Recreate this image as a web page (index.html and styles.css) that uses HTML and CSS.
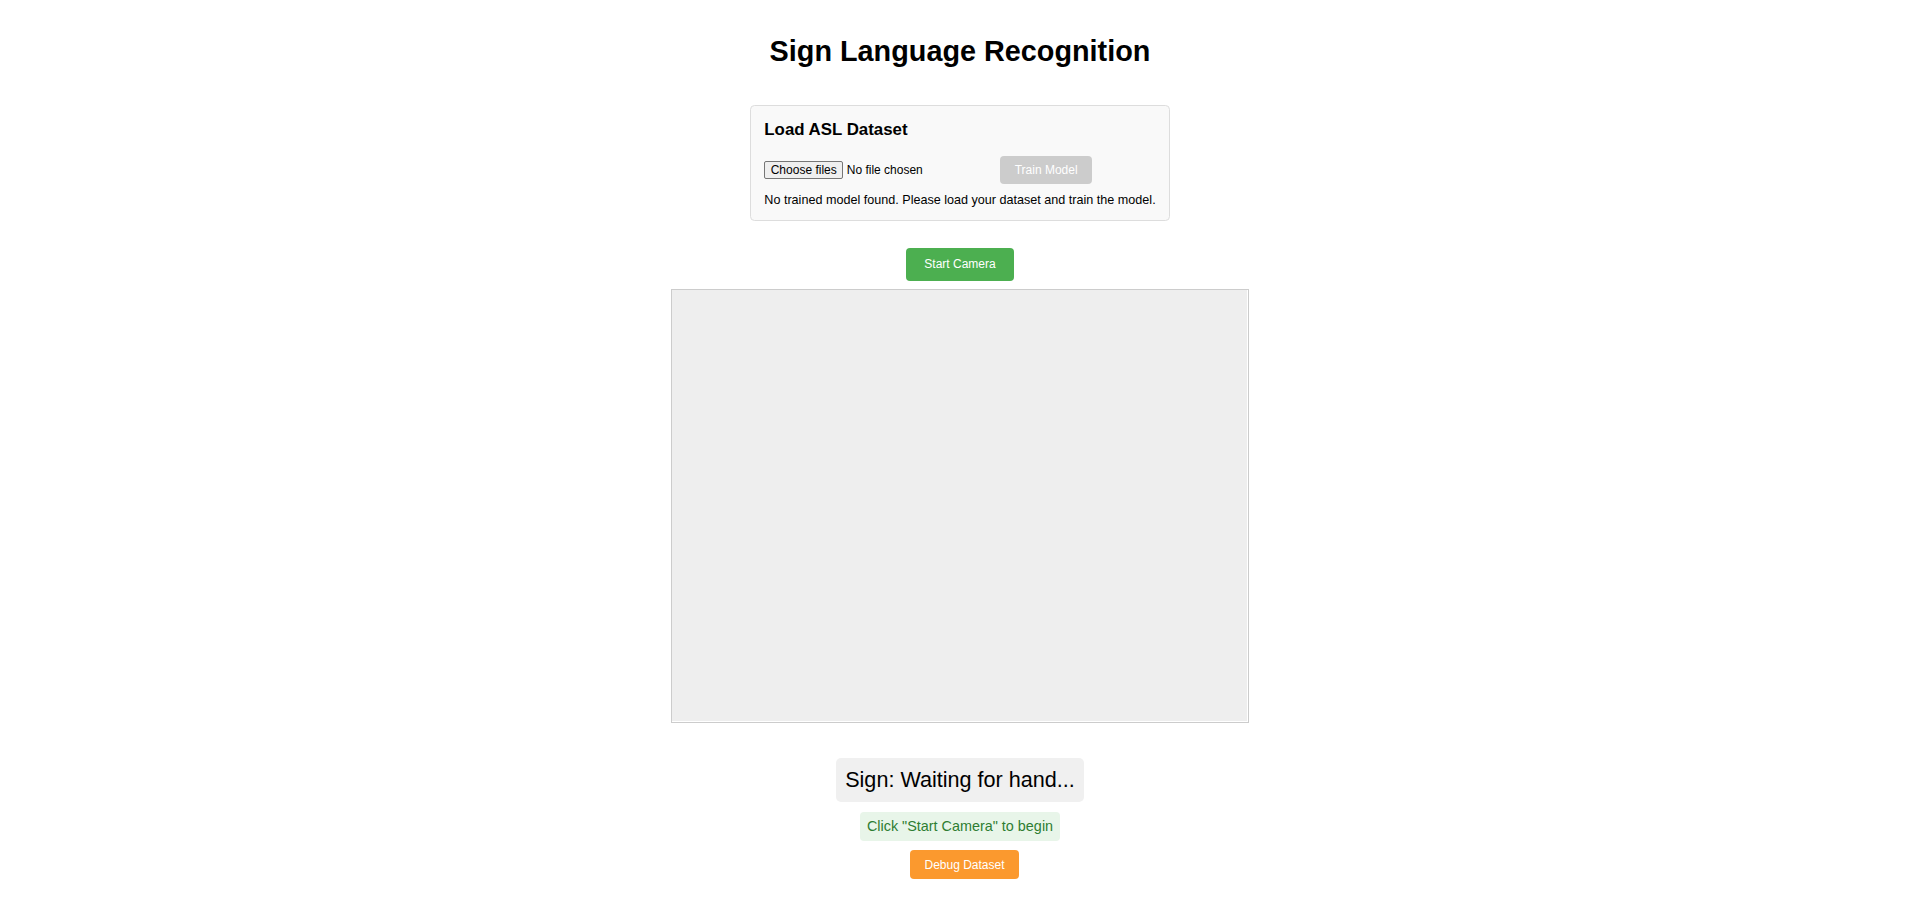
FILE: index.html
```html
<!DOCTYPE html>
<html lang="en">
<head>
<meta charset="utf-8">
<title>Sign Language Recognition</title>
<link rel="stylesheet" href="styles.css">
</head>
<body>
<main class="app">
  <h1 class="title">Sign Language Recognition</h1>
  <section class="dataset-panel">
    <h3 class="panel-title">Load ASL Dataset</h3>
    <div class="dataset-controls">
      <label class="file-picker">
        <input type="file" class="file-input" multiple>
        <span class="file-button">Choose files</span>
        <span class="file-name">No file chosen</span>
      </label>
      <button class="btn btn-train" disabled>Train Model</button>
    </div>
    <p class="model-status">No trained model found. Please load your dataset and train the model.</p>
  </section>
  <button class="btn btn-start">Start Camera</button>
  <div class="video-frame"><div class="video-area"></div></div>
  <div class="sign-output">Sign: Waiting for hand...</div>
  <div class="status">Click "Start Camera" to begin</div>
  <button class="btn btn-debug">Debug Dataset</button>
</main>
</body>
</html>
```
FILE: styles.css
```css
html, body {
  margin: 0;
  padding: 0;
  background: #ffffff;
}
body {
  font-family: "Liberation Sans", Arial, sans-serif;
  color: #000;
}
.app {
  display: flex;
  flex-direction: column;
  align-items: center;
}
.title {
  margin: 34.5px 0 0;
  font-size: 28.8px;
  font-weight: bold;
  line-height: normal;
}
.dataset-panel {
  margin-top: 37.7px;
  padding: 13.5px;
  background: #f9f9f9;
  border: 1px solid #dddddd;
  border-radius: 4.5px;
}
.panel-title {
  margin: 0;
  font-size: 16.85px;
  font-weight: bold;
  line-height: normal;
}
.dataset-controls {
  display: flex;
  align-items: center;
  margin-top: 16px;
}
.file-picker {
  display: flex;
  align-items: center;
  width: 227px;
  font-size: 12px;
  color: #000;
  cursor: pointer;
}
.file-input {
  display: none;
}
.file-button {
  margin-right: 3.6px;
  padding: 0.9px 5.4px;
  border: 1px solid #767676;
  border-radius: 2px;
  background: #efefef;
  line-height: normal;
}
.file-name {
  line-height: normal;
}
.btn {
  font-family: "Liberation Sans", Arial, sans-serif;
  font-size: 12px;
  line-height: normal;
  border: none;
  border-radius: 4px;
  color: #ffffff;
  cursor: pointer;
}
.btn-train {
  margin-left: 9px;
  padding: 7.1px 14.4px;
  background: #cccccc;
  cursor: default;
}
.model-status {
  margin: 9px 0 0;
  font-size: 12.6px;
  line-height: normal;
}
.btn-start {
  margin-top: 27px;
  padding: 9.1px 18px;
  background: #4caf50;
}
.video-frame {
  margin-top: 8.8px;
  width: 576px;
  height: 432px;
  border: 1px solid #cccccc;
  background: #ffffff;
}
.video-area {
  width: 575px;
  height: 431px;
  background: #eeeeee;
}
.sign-output {
  margin-top: 34.3px;
  padding: 9.4px 9.5px;
  font-size: 21.6px;
  line-height: normal;
  background: #f0f0f0;
  border-radius: 5px;
}
.status {
  margin-top: 9.2px;
  padding: 6.7px 7px;
  font-size: 14.4px;
  line-height: normal;
  color: #2e7d32;
  background: #e8f5e9;
  border-radius: 4px;
}
.btn-debug {
  margin: 9px 0 0 9px;
  padding: 7.6px 14.4px;
  background: #fb992e;
}
```
